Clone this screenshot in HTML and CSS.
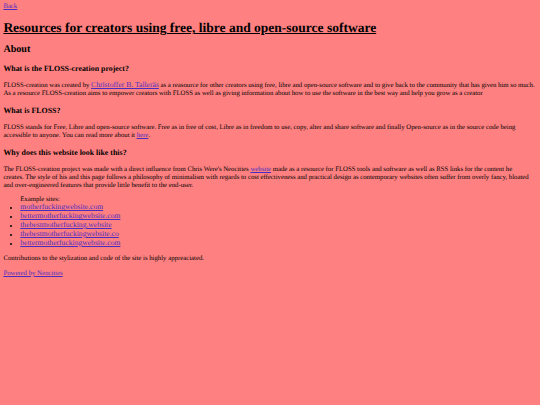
FILE: index.html
```html
<!DOCTYPE html>
<html lang="en">
<head>
    <meta charset="UTF-8">
    <meta name="viewport" content="width=device-width, initial-scale=1.0">
    <title>FLOSS-creation: About</title>
    <link rel="stylesheet" href="styles.css">
</head>
<body>
    <a href="#back">Back</a>
    <h1>Resources for creators using free, libre and open-source software</h1>
    <h2>About</h2>

    <h3>What is the FLOSS-creation project?</h3>
    <p>FLOSS-creation was created by <a class="big" href="#author">Christoffer B. Talleräs</a> as a reasource for other creators using free, libre and open-source software and to give back to the community that has given him so much. As a resource FLOSS-creation aims to empower creators with FLOSS as well as giving information about how to use the software in the best way and help you grow as a creator</p>

    <h3>What is FLOSS?</h3>
    <p>FLOSS stands for Free, Libre and open-source software. Free as in free of cost, Libre as in freedom to use, copy, alter and share software and finally Open-source as in the source code being accessible to anyone. You can read more about it <a href="#here">here</a>.</p>

    <h3>Why does this website look like this?</h3>
    <p>The FLOSS-creation project was made with a direct influence from Chris Were's Neocities <a href="#website">website</a> made as a resource for FLOSS tools and software as well as RSS links for the content he<br>creates. The style of his and this page follows a philosophy of minimalism with regards to cost effectiveness and practical design as contemporary websites often suffer from overly fancy, bloated and over-engineered features that provide little benefit to the end-user.</p>

    <ul>
        Example sites:
        <li><a class="big" href="#a">motherfuckingwebsite.com</a></li>
        <li><a class="big" href="#b">bettermotherfuckingwebsite.com</a></li>
        <li><a class="big" href="#c">thebestmotherfucking.website</a></li>
        <li><a class="big" href="#d">thebestmotherfuckingwebsite.co</a></li>
        <li><a class="big" href="#e">bettermotherfuckingwebsite.com</a></li>
    </ul>

    <p>Contributions to the stylization and code of the site is highly appreaciated.</p>
    <p><a href="#neocities">Powered by Neocities</a></p>
</body>
</html>
```

FILE: styles.css
```css
body {
    margin: 3.375px;
    background-color: #ff8080;
    color: #000;
    font-family: "Liberation Serif", serif;
    font-size: 6.75px;
    line-height: 8px;
    text-rendering: geometricPrecision;
}

a {
    color: #4a2cc0;
}

a.big {
    font-size: 7.6px;
    line-height: 0;
}

h1 {
    margin: 9px 0;
    font-size: 13.5px;
    line-height: 15px;
    text-decoration: underline;
}

h2 {
    margin: 9px 0;
    font-size: 10.125px;
    line-height: 11px;
}

h3 {
    margin: 8.5px 0;
    font-size: 7.9px;
    line-height: 9px;
}

p {
    margin: 6.4px 0;
}

ul {
    margin: 6px 0;
    padding-left: 16.875px;
}

li {
    line-height: 8.9px;
}
```
